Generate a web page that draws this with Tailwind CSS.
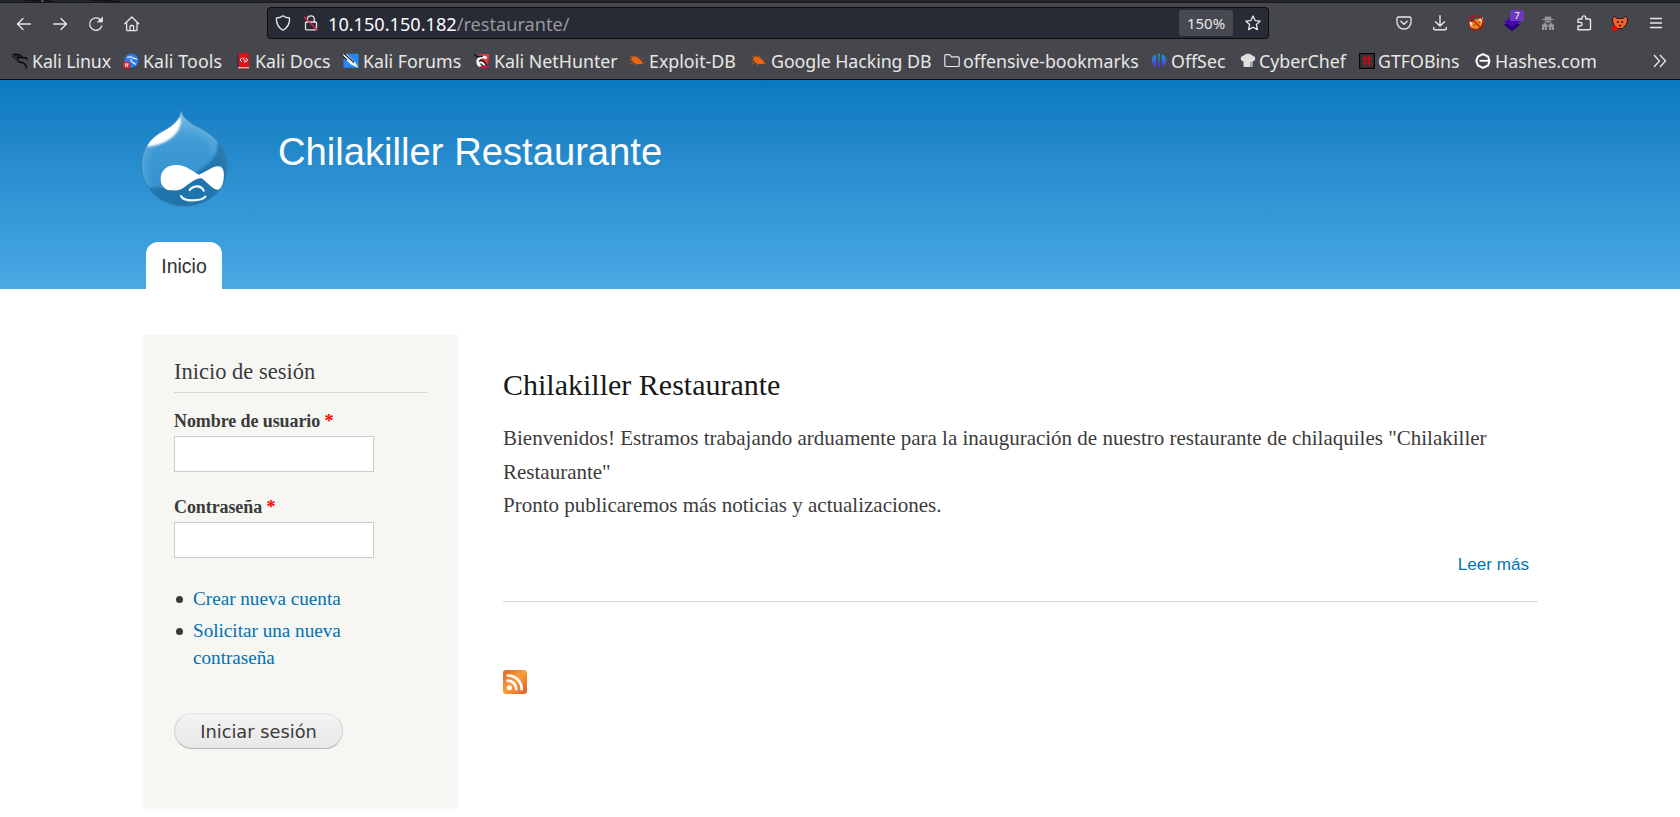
<!DOCTYPE html>
<html lang="es">
<head>
<meta charset="utf-8">
<title>Chilakiller Restaurante</title>
<script src="https://cdn.jsdelivr.net/npm/@tailwindcss/browser@4"></script>
</head>
<body class="h-[817px] overflow-hidden bg-white font-['Liberation_Serif',serif] text-[#3b3b3b]">

<!-- Browser chrome -->
<div class="h-20 border-b border-[#0c0c0d] bg-[#45474d] font-['Noto_Sans',sans-serif] text-[#e8e8e4]">
  <svg class="block h-[3px] w-full" viewBox="0 0 1680 3" preserveAspectRatio="none"><rect width="1680" height="3" fill="#22252e"/><path d="M42.500 0v2" stroke="#777" /><path d="M25 0l15 1M44 0l9 2M90 0l30 1.500" stroke="#111318" stroke-width="1.500"/><path d="M0 2.500H1680" stroke="#14161b"/></svg>
  <div class="flex h-10 items-center pt-[2px] pl-[6px]">
    <div class="flex w-[261px] shrink-0">
      <span class="flex w-9 justify-center"><svg width="16" height="16" viewBox="0 0 16 16" fill="none" stroke="currentColor" stroke-width="1.300" stroke-linecap="round" stroke-linejoin="round"><path d="M14.500 8H1.800M7 2.500L1.500 8L7 13.500"/></svg></span>
      <span class="flex w-9 justify-center"><svg width="16" height="16" viewBox="0 0 16 16" fill="none" stroke="currentColor" stroke-width="1.300" stroke-linecap="round" stroke-linejoin="round"><path d="M1.500 8h12.700M9 2.500l5.500 5.500L9 13.500"/></svg></span>
      <span class="flex w-9 justify-center"><svg width="16" height="16" viewBox="0 0 16 16" fill="none" stroke="currentColor" stroke-width="1.300" stroke-linecap="round" stroke-linejoin="round"><path d="M13.800 10A6.200 6.200 0 1 1 12.600 4"/><path d="M14.500 1.200v4.900H9.600z" fill="currentColor" stroke-width=".6"/></svg></span>
      <span class="flex w-9 justify-center"><svg width="16" height="16" viewBox="0 0 16 16" fill="none" stroke="currentColor" stroke-width="1.300" stroke-linecap="round" stroke-linejoin="round"><path d="M.8 7.800L7.800 1l7 6.800M2.600 6.500v7.200q0 1 1 1h8.400q1 0 1-1V6.500M6 14.500v-4q0-1 1-1h1.600q1 0 1 1v4"/></svg></span>
    </div>
    <div class="-mt-[2px] flex h-8 w-[1002px] shrink-0 items-center rounded-[4px] border border-[#0c0c0d] bg-[#282a36] pl-[7px]">
      <svg class="shrink-0" width="16" height="16" viewBox="0 0 16 16" fill="none" stroke="currentColor" stroke-width="1.300" stroke-linejoin="round"><path d="M8 .8C6 2.300 3.500 2.900 1.500 3c-.4 5 1.500 9.500 6.500 12.200C13 12.500 14.900 8 14.500 3 12.500 2.900 10 2.300 8 .8z"/></svg>
      <svg class="ml-[12px] shrink-0" width="16" height="16" viewBox="0 0 16 16" fill="none" stroke="currentColor" stroke-width="1.300"><path d="M4.500 7V4.300a3.400 3.400 0 0 1 6.800 0V7"/><rect x="2.500" y="7" width="11" height="7.800" rx="1"/><path d="M1 1.800L14.500 15.300" stroke="#e22850" stroke-width="1.500"/></svg>
      <span class="ml-[9px] pt-px text-[18.15px] leading-6 whitespace-nowrap"><span class="text-[#fbfbfe]">10.150.150.182</span><span class="text-[#97989d]">/restaurante/</span></span>
      <span class="ml-auto flex h-[26px] w-[54px] items-center justify-center rounded-[3px] bg-[#474952] pt-px text-[15px]">150%</span>
      <svg class="mr-[7px] ml-[12px]" width="16" height="16" viewBox="0 0 16 16" fill="none" stroke="currentColor" stroke-width="1.300" stroke-linejoin="round"><path d="M8 1l2.100 4.600 5 .6-3.700 3.400 1 5L8 12.200l-4.400 2.400 1-5L.9 6.200l5-.6z"/></svg>
    </div>
    <div class="-mt-[2px] ml-[117px] flex">
      <span class="flex w-9 justify-center"><svg width="16" height="16" viewBox="0 0 16 16" fill="none" stroke="currentColor" stroke-width="1.300" stroke-linecap="round" stroke-linejoin="round"><path d="M2.500 2h11q1.500 0 1.500 1.500V7a7 7 0 0 1-14 0V3.500Q1 2 2.500 2zM4.800 6.200L8 9.300l3.200-3.100"/></svg></span>
      <span class="flex w-9 justify-center"><svg width="16" height="16" viewBox="0 0 16 16" fill="none" stroke="currentColor" stroke-width="1.400" stroke-linecap="round" stroke-linejoin="round"><path d="M8 .8v10M3.500 6.800L8 11l4.500-4.200M1.700 12.500v1.200q0 1 1 1h10.600q1 0 1-1v-1.200"/></svg></span>
      <span class="flex w-9 justify-center"><svg width="16" height="16" viewBox="0 0 16 16"><path d="M1.500 8l3-1 2-2.500L10 4l4-1 .5 5-2.500 4.500-4 1.500-5-1z" fill="#e88c1e"/><path d="M.8 6l3.500 1.500L3 13zM10 4.500l5-2 .2 5z" fill="#fbe5c0"/><path d="M6 11l2-2.500 2 1.500M10 7l2 1" stroke="#8a3c10" fill="none"/><circle cx="8" cy="8" r="7.300" fill="none" stroke="#c40b0b" stroke-width="1.200"/><path d="M3 3l10 10" stroke="#c40b0b" stroke-width="1.200"/></svg></span>
      <span class="relative flex w-9 justify-center"><svg width="16" height="16" viewBox="0 0 16 16"><path d="M0 10l8-5 8 5-8 6z" fill="#240070"/><path d="M0 6.500L8 1l8 5.500-8 6z" fill="#4608ad"/></svg><span class="absolute -top-[5px] left-4 h-[11px] w-[14px] rounded-[1px] bg-[#6b39bd] text-center text-[9px] leading-[11px] text-white">7</span></span>
      <span class="flex w-9 justify-center"><svg width="16" height="16" viewBox="0 0 16 16" fill="#97989b"><path d="M5 1.200l2 .6 1-.3 1 .3 2-.6.500 2.800H13.500v1h-11V4h2zM4.500 5.500h7l-.6 2-2-.3L8 8.500l-.9-1.300-2 .3zM2 10l3-2.200L8 10.500 11 7.800 14 10v5H9V12L8 11l-1 1v3H2z"/><path d="M4.500 12v3M11.500 12v3" stroke="#55575c" stroke-width=".8"/></svg></span>
      <span class="flex w-9 justify-center"><svg width="16" height="16" viewBox="0 0 16 16" fill="none" stroke="currentColor" stroke-width="1.400" stroke-linejoin="round"><path d="M2 14.700V11h2.200a1.700 1.700 0 0 0 0-3.600H2V5q0-1 1-1h3V2.800a1.900 1.900 0 0 1 3.800 0V4H13q1.500 0 1.500 1v8.700q0 1-1 1z"/></svg></span>
      <span class="flex w-9 justify-center"><svg width="16" height="16" viewBox="0 0 16 16"><path d="M1.300.5L5 3.500h6L14.700.5 15.500 6l-1.500 4-3.500 3.500h-5L2 10 .5 6z" fill="#f5622c" stroke="#2c1a14" stroke-width="1"/><path d="M4.800 7h2M9.300 7h2M7 10.500h2.200" stroke="#111" stroke-width="1.300"/><circle cx="2.600" cy="13.300" r="2.600" fill="#f00"/></svg></span>
      <span class="flex w-9 justify-center"><svg width="16" height="16" viewBox="0 0 16 16" stroke="currentColor" stroke-width="1.300"><path d="M2 3.500h12M2 8h12M2 12.500h12"/></svg></span>
    </div>
  </div>
  <div class="flex h-9 items-center pl-[12px] text-[17.8px] leading-6 whitespace-nowrap">
    <div class="flex w-[111px] shrink-0 items-center gap-[4px] tracking-[-0.1px]"><svg class="shrink-0" width="16" height="16" viewBox="0 0 16 16" fill="none" stroke="#0b0b0c" stroke-linecap="round"><path d="M.5 1.500C4 .8 8 1 10.500 4M.5 3.500C4 2 7 3 9 5M2 5.500l4-1" stroke-width="1.100"/><path d="M9.500 4.500C5 4 4 8.500 8 9.200s5.500.8 6.500 5.800M10 4.500l4.200.5.800 1.500" stroke-width="1.500"/></svg>Kali Linux</div>
    <div class="flex w-[114px] shrink-0 items-center gap-[4px] tracking-[0.1px]"><svg class="shrink-0" width="16" height="16" viewBox="0 0 16 16"><circle cx="8.500" cy="7.500" r="7" fill="#2a7de8"/><path d="M4 4.500c4-1.500 6-.5 7 1.500M8 6c-1 3 1.500 3 5 5.500M11 5l3 1.500" stroke="#e9f2ff" fill="none" stroke-width="1.200"/><circle cx="3.600" cy="12" r="3.600" fill="#e1252b"/><path d="M1.800 11h3.800M2.800 11v3M4.600 11v3" stroke="#fff" stroke-width=".9"/></svg>Kali Tools</div>
    <div class="flex w-[106px] shrink-0 items-center gap-[6px]"><svg class="shrink-0" width="12" height="16" viewBox="0 0 12 16"><rect width="12" height="15.500" rx="1" fill="#d91414"/><path d="M.8.500V15" stroke="#29305c" stroke-width="1.600"/><path d="M1 14.700h11" stroke="#e9caca" stroke-width="1.200"/><path d="M5 4.500L3 7l2 2M9 5l1.500 2.500L8.500 9M7.500 4.500c-2 1-1.500 2 0 2.500s1 2-.5 2.500" stroke="#fff" fill="none"/></svg>Kali Docs</div>
    <div class="flex w-[131px] shrink-0 items-center gap-[4px]"><svg class="shrink-0" width="16" height="16" viewBox="0 0 16 16"><rect x=".5" y=".8" width="15" height="14" fill="#258af0"/><path d="M0 1l4 .5 8 7.500L15.500 15 8 11.500 2 6z" fill="#f7f7f7"/><path d="M1 .5l10 9M0 3.500l4 3.500" stroke="#171a22" stroke-width="1.100"/></svg>Kali Forums</div>
    <div class="flex w-[155px] shrink-0 items-center gap-[4px]"><svg class="shrink-0" width="16" height="16" viewBox="0 0 16 16"><path d="M4 1h11.500l-1.500 9-3 3z" fill="#ef3038"/><path d="M12.500 5.500A5 5 0 1 0 7 13.500" fill="none" stroke="#fff" stroke-width="2.800"/><path d="M0 1l3 3 6-1M5 8.500c3-2.500 6-.5 7 4" fill="none" stroke="#17171a" stroke-width="1.400"/><path d="M5 10c3-1.500 4 0 6 3" fill="none" stroke="#fff" stroke-width="1.800"/><path d="M5 13.500h3l1-1.500 6 1.500v1.500H6z" fill="#c81440"/></svg>Kali NetHunter</div>
    <div class="flex w-[122px] shrink-0 items-center gap-[4px]"><svg class="shrink-0" width="16" height="16" viewBox="0 0 16 16"><path d="M2 5.500c2-3 5-2 7-.5s4 2.500 4.500 5.500l-2 .5c-4 1-8-1-9.500-5.500z" fill="#f0640f"/><path d="M0 7l3 .5M1 11l4-1.500M6 13l1-2M1 3l3 1M8 2l1 3M13 6l2-1M13 10h2" stroke="#b8541a" stroke-width=".9"/></svg>Exploit-DB</div>
    <div class="flex w-[193px] shrink-0 items-center gap-[4px] tracking-[-0.06px]"><svg class="shrink-0" width="16" height="16" viewBox="0 0 16 16"><path d="M2 5.500c2-3 5-2 7-.5s4 2.500 4.500 5.500l-2 .5c-4 1-8-1-9.500-5.500z" fill="#f0640f"/><path d="M0 7l3 .5M1 11l4-1.500M6 13l1-2M1 3l3 1M8 2l1 3M13 6l2-1M13 10h2" stroke="#b8541a" stroke-width=".9"/></svg>Google Hacking DB</div>
    <div class="flex w-[207px] shrink-0 items-center gap-[3px]"><svg class="shrink-0" width="16" height="16" viewBox="0 0 16 16" fill="none" stroke="currentColor" stroke-width="1.200" stroke-linejoin="round"><path d="M.8 12.500V2.800q0-1.200 1.200-1.200h3.500l2 2.200H14q1.200 0 1.200 1.200v7.500q0 1-1 1H2q-1.200 0-1.200-1z"/></svg>offensive-bookmarks</div>
    <div class="flex w-[89px] shrink-0 items-center gap-[4px]"><svg class="shrink-0" width="16" height="16" viewBox="0 0 16 16"><defs><linearGradient id="os" x2="0" y2="1"><stop offset="0" stop-color="#18a6c4"/><stop offset="1" stop-color="#5527d8"/></linearGradient></defs><path d="M5.300 1.500v12.300C2 13 .8 10 .8 7.500S2 2.300 5.300 1.500zM10.700 1.500v12.300c3.300-.8 4.500-3.800 4.500-6.300S14 2.300 10.700 1.500zM7.200.5h1.600V15H7.200z" fill="url(#os)"/></svg>OffSec</div>
    <div class="flex w-[119px] shrink-0 items-center gap-[3px]"><svg class="shrink-0" width="16" height="16" viewBox="0 0 16 16"><path d="M3.500 8.500C-.5 8 0 2.500 4 2.500c1-2.500 7-2.500 8 0 4 0 4.500 5.500.5 6V14h-9z" fill="#dededc"/><path d="M10 9h2.500v5H10z" fill="#a5a6a6"/></svg>CyberChef</div>
    <div class="flex w-[116px] shrink-0 items-center gap-[3px]"><svg class="shrink-0" width="16" height="16" viewBox="0 0 16 16"><rect x=".6" y=".6" width="14.800" height="14.800" fill="#333438" stroke="#060606" stroke-width="1.200"/><path d="M6 2.500v10.500M10 2.500v10.500M3 5.500h10M3 10h10" stroke="#c30d16" stroke-width="1.600"/></svg>GTFOBins</div>
    <div class="flex shrink-0 items-center gap-[4px]"><svg class="shrink-0" width="16" height="16" viewBox="0 0 16 16"><path d="M8 1.200l5 2.300 1.500 4.500L13 12.500l-5 2.300-5-2.300L1.300 8 3 3.500z" fill="#45474d" stroke="#fff" stroke-width="2"/><path d="M4.500 7.800h10" stroke="#fff" stroke-width="1.800"/></svg>Hashes.com</div>
    <svg class="mr-[13px] ml-auto" width="14" height="14" viewBox="0 0 14 14" fill="none" stroke="currentColor" stroke-width="1.300"><path d="M1 1l5.500 6L1 13M7 1l5.500 6L7 13"/></svg>
  </div>
</div>

<!-- Site header -->
<header class="flex h-[209px] flex-col justify-between bg-linear-to-b from-[#0779bf] to-[#48a9e4] pl-[136px] font-['Liberation_Sans',sans-serif]">
  <div class="flex pt-6">
    <svg width="100" height="110" viewBox="0 0 300 330">
      <defs>
        <linearGradient id="dg" x2="0" y2="1"><stop offset="0" stop-color="#62b0e0"/><stop offset=".35" stop-color="#3f9ad4"/><stop offset=".65" stop-color="#3795d1"/><stop offset="1" stop-color="#2b82bd"/></linearGradient>
        <radialGradient id="dr" cx=".46" cy=".58" r=".5"><stop offset=".6" stop-color="#8cc8ec" stop-opacity="0"/><stop offset="1" stop-color="#a4d3ef" stop-opacity=".5"/></radialGradient>
        <clipPath id="dc"><path d="M135 16c6 32 36 44 65 60 42 24 73 62 73 112 0 70-57 118-127 118S16 252 16 185c0-50 28-84 63-103 27-15 50-27 56-66z"/></clipPath>
        <filter id="db"><feGaussianBlur stdDeviation="2.500"/></filter>
      </defs>
      <g clip-path="url(#dc)">
        <path d="M0 0h300v330H0z" fill="url(#dg)"/>
        <path d="M0 0h300v330H0z" fill="url(#dr)"/>
        <path d="M244 110c8 55-40 78-72 104-40 38-80 40-150 35l10 70h260V130z" fill="#1e6ea6" opacity=".8" filter="url(#db)"/>
        <path d="M134 40c8 48-46 84-98 88-22-14 64-70 98-88z" fill="#fff" filter="url(#db)"/>
      </g>
      <path d="M135 16c6 32 36 44 65 60 42 24 73 62 73 112 0 70-57 118-127 118S16 252 16 185c0-50 28-84 63-103 27-15 50-27 56-66z" fill="none" stroke="#297bb0" stroke-width="3" opacity=".8"/>
      <path d="M189 212c20-7 38-24 56-25 20-1 20 24 18 38-3 18-8 32-19 32-15 0-32-25-48-34-15-2-33 14-45 22-15 12-26 15-43 14-21 0-34-13-34-35 0-23 17-41 48-41 28 0 45 18 67 29z" fill="#fff"/>
      <path d="M161 258c8-12 33-18 42 2M135 276c8 19 62 15 73 2" fill="none" stroke="#f8fcff" stroke-width="6.500" stroke-linecap="round"/>
    </svg>
    <h1 class="mt-7 ml-[42px] text-[38.2px] leading-10 text-[#fffeff]">Chilakiller Restaurante</h1>
  </div>
  <nav class="ml-[10px] flex">
    <a class="h-[47px] w-[76px] rounded-t-[12px] bg-white text-center text-[19.5px] leading-[48px] text-[#333] text-shadow-[0_1px_0_#eee]">Inicio</a>
  </nav>
</header>

<!-- Page -->
<main class="flex items-start">
  <aside class="mt-[45px] ml-[143px] h-[475px] w-[315px] border border-[#f9f9f9] bg-[#f6f6f2] px-[30px] pt-[22px]">
    <h2 class="h-9 border-b border-[#d6d6d6] text-[22.5px] leading-[30px] text-shadow-[0_1px_0_#fff]">Inicio de sesión</h2>
    <label class="mt-4 block text-[18px] leading-6 font-bold tracking-[-0.09px]">Nombre de usuario <span class="text-[#f00]">*</span></label>
    <input class="mt-[3px] block h-9 w-[200px] border border-[#ccc] bg-white">
    <label class="mt-[23px] block text-[18px] leading-6 font-bold tracking-[-0.09px]">Contraseña <span class="text-[#f00]">*</span></label>
    <input class="mt-[3px] block h-9 w-[200px] border border-[#ccc] bg-white">
    <ul class="mt-[27px] space-y-[5px] text-[19.15px] leading-[27px] text-[#0071b3]">
      <li class="flex gap-[10px]"><span class="mt-[11px] ml-[2px] size-[7px] shrink-0 rounded-full bg-[#3b3b3b]"></span><a>Crear nueva cuenta</a></li>
      <li class="flex gap-[10px]"><span class="mt-[11px] ml-[2px] size-[7px] shrink-0 rounded-full bg-[#3b3b3b]"></span><a>Solicitar una nueva<br>contraseña</a></li>
    </ul>
    <button class="mt-[42px] block h-9 w-[169px] rounded-full border border-t-[#e4e4e4] border-r-[#d2d2d2] border-b-[#b4b4b4] border-l-[#d2d2d2] bg-linear-to-b from-[#f3f3f3] to-[#e8e8e8] font-['DejaVu_Sans',sans-serif] text-[17.8px] leading-[33px] text-[#3a3a3a]">Iniciar sesión</button>
  </aside>
  <section class="mt-[76px] ml-[45px] w-[1035px]">
    <article class="h-[237px] border-b border-[#d3d7d9]">
      <h2 class="text-[30px] leading-10 text-[#181818]">Chilakiller Restaurante</h2>
      <p class="mt-[17px] text-[21px] leading-[33.5px]">Bienvenidos! Estramos trabajando arduamente para la inauguración de nuestro restaurante de chilaquiles "Chilakiller<br>Restaurante"<br>Pronto publicaremos más noticias y actualizaciones.</p>
      <a class="mt-[30.5px] mr-[9px] block text-right font-['Liberation_Sans',sans-serif] text-[17.1px] leading-6 text-[#0071b3]">Leer más</a>
    </article>
    <svg class="mt-[68px]" width="24" height="24" viewBox="0 0 24 24"><defs><linearGradient id="rs" x2="1" y2="1"><stop offset="0" stop-color="#dd6428"/><stop offset=".3" stop-color="#f08a35"/><stop offset=".5" stop-color="#fb9d3a"/><stop offset=".75" stop-color="#ea7c32"/><stop offset="1" stop-color="#d9602a"/></linearGradient></defs><rect width="24" height="24" rx="3" fill="url(#rs)"/><circle cx="6.300" cy="17.700" r="2.500" fill="#fff"/><path d="M4.800 10.700a8.500 8.500 0 0 1 8.500 8.500M4.800 5.500A13.700 13.700 0 0 1 18.700 19.200" fill="none" stroke="#fff" stroke-width="2.700" stroke-linecap="round"/></svg>
  </section>
</main>
</body>
</html>
